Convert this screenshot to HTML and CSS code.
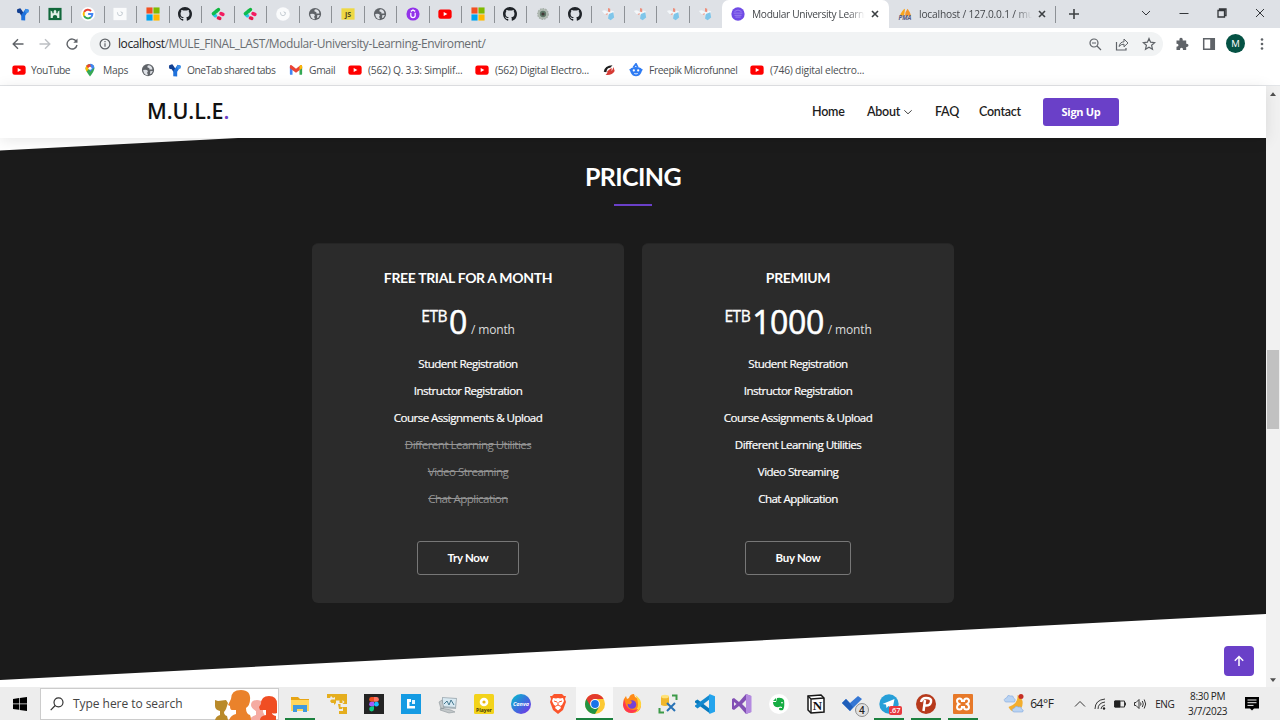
FILE: index.html
```html
<!DOCTYPE html>
<html lang="en">
<head>
<meta charset="utf-8">
<title>Modular University Learning Enviroment</title>
<link rel="stylesheet" href="styles.css">
</head>
<body>
<svg class="defs" aria-hidden="true">
  <symbol id="onetab" viewBox="0 0 16 16"><path d="M1.500 2.500 5 1.500 8.500 6.500 8 12 5.500 9Z" fill="#123f91"/><path d="M14.800 3.500 11 2 6 9v6l4.500.500V10Z" fill="#1f72dc"/><circle cx="3.600" cy="4.500" r="2.600" fill="#123f91"/><circle cx="12.500" cy="4.500" r="2.300" fill="#3c8fe8"/></symbol>
  <symbol id="castle" viewBox="0 0 16 16"><path d="M.5 1h15v14H.5z" fill="#12683b"/><path d="M3 4l2 1.500V7h1.500V4.500L8 3l1.500 1.500V7H11V5.500L13 4v8.500h-2.500V11q0-2-2.500-2t-2.500 2v1.500H3Z" fill="#e3f0e7"/></symbol>
  <symbol id="google" viewBox="0 0 16 16"><circle cx="8" cy="8" r="8" fill="#fff"/><g fill="none" stroke-width="2.200"><path d="M11.500 4.600A5 5 0 0 0 3.600 5.700" stroke="#ea4335"/><path d="M3.600 5.700a5 5 0 0 0 0 4.600" stroke="#fbbc05"/><path d="M3.600 10.300a5 5 0 0 0 7.700 1.500" stroke="#34a853"/><path d="M11.300 11.800A5 5 0 0 0 13 8H8.200" stroke="#4285f4"/></g></symbol>
  <symbol id="sketchsq" viewBox="0 0 16 16"><path d="M.5 1h15v14H.5z" fill="#fafbfc"/><path d="M5 6q0 4 3 4t3-4M9 5l1 2" fill="none" stroke="#c0c8cf"/></symbol>
  <symbol id="sketch" viewBox="0 0 16 16"><circle cx="8" cy="8" r="7.800" fill="#fafbfc"/><path d="M5 6q0 4 3 4t3-4M9 5l1 2" fill="none" stroke="#c0c8cf"/></symbol>
  <symbol id="ms" viewBox="0 0 16 16"><path d="M.5.5h7v7h-7z" fill="#f25022"/><path d="M8.500.5h7v7h-7z" fill="#7fba00"/><path d="M.5 8.500h7v7h-7z" fill="#00a4ef"/><path d="M8.500 8.500h7v7h-7z" fill="#ffb900"/></symbol>
  <symbol id="github" viewBox="0 0 16 16"><path fill="#202429" d="M8 0C3.580 0 0 3.580 0 8c0 3.540 2.290 6.530 5.470 7.590.4.070.55-.17.55-.38 0-.19-.01-.82-.01-1.490-2.010.37-2.530-.49-2.690-.94-.09-.23-.48-.94-.82-1.130-.28-.15-.68-.52-.01-.53.63-.01 1.080.58 1.230.82.72 1.210 1.870.87 2.330.66.070-.52.28-.87.51-1.070-1.780-.2-3.640-.89-3.640-3.950 0-.87.31-1.590.82-2.150-.08-.2-.36-1.020.08-2.120 0 0 .67-.21 2.200.82A7.600 7.600 0 0 1 8 3.860c.68 0 1.360.09 2 .27 1.530-1.040 2.200-.82 2.200-.82.44 1.100.16 1.920.08 2.120.51.56.82 1.270.82 2.150 0 3.070-1.870 3.750-3.650 3.950.29.25.54.73.54 1.480 0 1.070-.01 1.930-.01 2.200 0 .21.15.46.55.38A8 8 0 0 0 16 8c0-4.420-3.580-8-8-8"/></symbol>
  <symbol id="clover" viewBox="0 0 16 16"><g stroke-linecap="round" stroke-width="4"><path d="M6.500 4.500 8.500 3" stroke="#0eb53d"/><path d="M3.500 8.500 5 10" stroke="#28c5e9"/><path d="M11.500 7.500 13.500 8.500" stroke="#f31d61"/><path d="M8.500 12.500 10 13" stroke="#e8194e"/><path d="M2.800 7.500 6 5" stroke="#12bc50"/></g></symbol>
  <symbol id="globe" viewBox="0 0 16 16"><circle cx="8" cy="8" r="7" fill="#5f6368"/><path d="M2.500 8q4-1 5.500 1l-1 2 1 3q-5 0-5.500-6M7.500 3q-1 2 1 2.500t1 2h3.500q0-4-4-5M10.500 9.500q3-1 3 0l-2 3h-1Z" fill="#dee1e6"/></symbol>
  <symbol id="js" viewBox="0 0 16 16"><path d="M.5 1.500h15v13H.5z" fill="#eed843"/><text x="8" y="11" text-anchor="middle" font-size="8" font-weight="700" fill="#4c4722">JS</text></symbol>
  <symbol id="udemy" viewBox="0 0 16 16"><circle cx="8" cy="8" r="7.500" fill="#9333ea"/><path d="M5.500 6.500v3.300q0 2.400 2.500 2.400t2.500-2.400V6.500M5.500 5 8 3.400 10.500 5" fill="none" stroke="#fff" stroke-width="1.400"/></symbol>
  <symbol id="yt" viewBox="0 0 16 16"><rect x=".4" y="2.800" width="15.200" height="10.600" rx="2.600" fill="#f00"/><path d="m6.500 5.800 4.200 2.300-4.200 2.300Z" fill="#fff"/></symbol>
  <symbol id="seal" viewBox="0 0 16 16"><circle cx="8" cy="8" r="6" fill="#b1bbb3" stroke="#a6b0a9" stroke-width="1.500" stroke-dasharray="2 1"/><circle cx="8" cy="8" r="3.600" fill="#5e7868"/><circle cx="8" cy="8" r="1.800" fill="#433936"/></symbol>
  <symbol id="painter" viewBox="0 0 16 16"><path d="M1 4.500q4-2 7 1.500l4-2 3 1-1 2-5 2-5-1Z" fill="#f3f7fa"/><path d="m8 1 2.500 1v4L8 5ZM5 8l3-1-1 2Z" fill="#ec8f7c"/><path d="m9 8 5-2 1 6-4 3-3-2Z" fill="#7fc6ea"/></symbol>
  <symbol id="mule" viewBox="0 0 16 16"><circle cx="8" cy="8" r="7.600" fill="#704be5"/><path d="M3 7h10M4 5q4-3 8 0M4 9.500h8M5 11.500h6" stroke="#9f88f0" fill="none"/></symbol>
  <symbol id="pma" viewBox="0 0 16 16"><path d="M2 10Q5 3 8 2l-1 8Z" fill="#f8a51b"/><path d="M8 10q0-5 3-8 3 4 4 8Z" fill="#f3962c"/><text x="8" y="15" text-anchor="middle" font-size="7" font-style="italic" font-weight="700" fill="#55597e">PMA</text></symbol>
  <symbol id="pin" viewBox="0 0 16 16"><path d="M8 15.500Q3 9 3 6a5 5 0 0 1 10 0q0 3-5 9.500" fill="#35a853"/><path d="M8 1a5 5 0 0 1 5 4L8 10Z" fill="#4285f4"/><path d="M3 7.500V5a5 5 0 0 1 2-3l3 3-4 5Z" fill="#fbbc04"/><path d="M3.800 3.500A5 5 0 0 1 8 1l1 3-3 2Z" fill="#ea4335"/><circle cx="8" cy="6" r="1.800" fill="#fff"/></symbol>
  <symbol id="gmail" viewBox="0 0 16 16"><path d="M1 4h3v9.500H2q-1 0-1-1Z" fill="#4285f4"/><path d="M12 4h3v8.500q0 1-1 1h-2Z" fill="#34a853"/><path d="M1 4q0-2 2-1.500l5 4 5-4q2-.5 2 1.500v2l-7 5-7-5Z" fill="#ea4335"/><path d="M12 3.500 13 2.500q2-.5 2 1.500v2l-3 2Z" fill="#fbbc04"/></symbol>
  <symbol id="swirl" viewBox="0 0 16 16"><path d="M2 10Q3 3 12 2.500L9.500 5.500q-4 0-4.500 5Z" fill="#1d1d1d"/><path d="m13 4.500 1.500 4.500q-3 5.500-10.500 4.500l3-3q4 0 5-3ZM6 9.500l5-4v4l-5 2Z" fill="#d63a33"/></symbol>
  <symbol id="freepik" viewBox="0 0 16 16"><path d="M2 6q6-3 12 0v5q-2 4-6 4t-6-4Z" fill="#2f7cf3"/><path d="m5 5 3-4 2 4M1 7l2 3m12-3-2 3" stroke="#2f7cf3" stroke-width="2" fill="none"/><circle cx="5.500" cy="8.500" r="1.300" fill="#fff"/><circle cx="10.500" cy="8.500" r="1.300" fill="#fff"/><path d="M6 12q2 1 4 0" stroke="#fff" fill="none"/></symbol>
</svg>

<div class="tabstrip">
  <div class="tabs">
    <span class="tab"><svg><use href="#onetab"/></svg></span><span class="tab"><svg><use href="#castle"/></svg></span><span class="tab"><svg><use href="#google"/></svg></span><span class="tab"><svg><use href="#sketchsq"/></svg></span><span class="tab"><svg><use href="#ms"/></svg></span><span class="tab"><svg><use href="#github"/></svg></span><span class="tab"><svg><use href="#clover"/></svg></span><span class="tab"><svg><use href="#clover"/></svg></span><span class="tab"><svg><use href="#sketch"/></svg></span><span class="tab"><svg><use href="#globe"/></svg></span><span class="tab"><svg><use href="#js"/></svg></span><span class="tab"><svg><use href="#globe"/></svg></span><span class="tab"><svg><use href="#udemy"/></svg></span><span class="tab"><svg><use href="#yt"/></svg></span><span class="tab"><svg><use href="#ms"/></svg></span><span class="tab"><svg><use href="#github"/></svg></span><span class="tab"><svg><use href="#seal"/></svg></span><span class="tab"><svg><use href="#github"/></svg></span><span class="tab"><svg><use href="#painter"/></svg></span><span class="tab"><svg><use href="#painter"/></svg></span><span class="tab"><svg><use href="#painter"/></svg></span><span class="tab last"><svg><use href="#painter"/></svg></span>
  </div>
  <div class="tab-active"><svg class="fav"><use href="#mule"/></svg><span class="tab-title">Modular University Learni</span><svg class="x" viewBox="0 0 8 8"><path d="m1 1 6 6m0-6L1 7"/></svg></div>
  <div class="tab-pma"><svg class="fav"><use href="#pma"/></svg><span class="tab-title second">localhost / 127.0.0.1 / mu</span><svg class="x" viewBox="0 0 8 8"><path d="m1 1 6 6m0-6L1 7"/></svg></div>
  <svg class="plus" viewBox="0 0 12 12"><path d="M6 1v10M1 6h10"/></svg>
  <div class="winctl">
    <svg viewBox="0 0 10 10"><path d="m1 3 4 4 4-4"/></svg>
    <svg viewBox="0 0 10 10"><path d="M.5 5.500h9"/></svg>
    <svg viewBox="0 0 10 10"><path d="M1 2.500h6.500V9H1zM2.500 2V1H9v6.500H8" class="bold"/></svg>
    <svg viewBox="0 0 10 10"><path d="m1 1 8 8m0-8L1 9"/></svg>
  </div>
</div>

<div class="toolbar">
  <div class="navbtns">
    <svg viewBox="0 0 12 12"><path d="M11.500 6H1.300M6 1.200 1.200 6 6 10.800"/></svg>
    <svg class="dim" viewBox="0 0 12 12"><path d="M.5 6h10.200M6 1.200 10.800 6 6 10.800"/></svg>
    <svg viewBox="0 0 12 12"><path d="M10.400 3.500A5 5 0 1 0 11 7"/><path d="M11.500.5v4.200H7.300Z" fill="#5f6368" stroke="none"/></svg>
  </div>
  <div class="omnibox">
    <svg class="info" viewBox="0 0 12 12"><circle cx="6" cy="6" r="4.900"/><path d="M6 5.300v3.500M6 3v1.200"/></svg>
    <span class="url"><b>localhost</b>/MULE_FINAL_LAST/Modular-University-Learning-Enviroment/</span>
    <svg class="oi" viewBox="0 0 14 14"><circle cx="6" cy="6" r="4"/><path d="m9 9 4 4M4 6h4"/></svg>
    <svg class="oi" viewBox="0 0 14 14"><path d="M1.500 5v8H11v-2" /><path d="M4 9.500Q5 4.800 9 4.800V2l4 4-4 3.800V7.200Q6 7 4 9.500Z" stroke-width="1"/></svg>
    <svg class="oi" viewBox="0 0 14 14"><path d="m7 1.500 1.600 3.700 4 .4-3 2.700.9 4L7 10.200l-3.500 2.100.9-4-3-2.700 4-.4Z"/></svg>
  </div>
  <div class="exts">
    <svg viewBox="0 0 14 14"><path fill="#5f6368" stroke="none" d="M1.500 3.500h3Q4 .8 6 .8t1.700 2.700h3.500v3.200q2.300-.2 2.300 1.600t-2.300 1.600V13H8q.2-2.200-1.500-2.200T5 13H1.500V9.700q2-.1 2-1.500t-2-1.400Z"/></svg>
    <svg viewBox="0 0 14 14"><path d="M1.700 1.700h10.600v10.600H1.700z" stroke-width="1.500"/><path d="M8.200 1h4.500v12H8.200z" fill="#5f6368" stroke="none"/></svg>
    <span class="avatar">M</span>
    <svg viewBox="0 0 14 14"><g fill="#5f6368" stroke="none"><circle cx="7" cy="2.500" r="1.300"/><circle cx="7" cy="7" r="1.300"/><circle cx="7" cy="11.500" r="1.300"/></g></svg>
  </div>
</div>

<div class="bookmarks">
  <span class="bm bm-youtube"><svg><use href="#yt"/></svg>YouTube</span>
  <span class="bm bm-maps"><svg><use href="#pin"/></svg>Maps</span>
  <span class="bm bm-globe"><svg><use href="#globe"/></svg></span>
  <span class="bm bm-onetab"><svg><use href="#onetab"/></svg>OneTab shared tabs</span>
  <span class="bm bm-gmail"><svg><use href="#gmail"/></svg>Gmail</span>
  <span class="bm bm-q"><svg><use href="#yt"/></svg>(562) Q. 3.3: Simplif...</span>
  <span class="bm bm-digital"><svg><use href="#yt"/></svg>(562) Digital Electro...</span>
  <span class="bm bm-swirl"><svg><use href="#swirl"/></svg></span>
  <span class="bm bm-freepik"><svg><use href="#freepik"/></svg>Freepik Microfunnel</span>
  <span class="bm bm-last"><svg><use href="#yt"/></svg>(746) digital electro...</span>
</div>

<div class="viewport">
  <div class="page">
    <header class="header">
      <div class="logo">M.U.L.E<i>.</i></div>
      <nav class="nav">
        <a class="n-home">Home</a>
        <a class="n-about">About<svg viewBox="0 0 8 8"><path d="m.3 2.300 3.700 3.500 3.700-3.500"/></svg></a>
        <a class="n-faq">FAQ</a>
        <a class="n-contact">Contact</a>
        <a class="signup">Sign Up</a>
      </nav>
    </header>
    <main class="main">
      <section class="pricing">
        <h2>PRICING</h2>
        <div class="rule"></div>
        <div class="cards">
          <article class="card">
            <h3>FREE TRIAL FOR A MONTH</h3>
            <div class="price"><sup>ETB</sup><strong>0</strong><small>/ month</small></div>
            <ul>
              <li>Student Registration</li><li>Instructor Registration</li><li>Course Assignments &amp; Upload</li>
              <li class="na">Different Learning Utilities</li><li class="na">Video Streaming</li><li class="na">Chat Application</li>
            </ul>
            <a class="buy try">Try Now</a>
          </article>
          <article class="card premium">
            <h3>PREMIUM</h3>
            <div class="price"><sup>ETB</sup><strong>1000</strong><small>/ month</small></div>
            <ul>
              <li>Student Registration</li><li>Instructor Registration</li><li>Course Assignments &amp; Upload</li>
              <li>Different Learning Utilities</li><li>Video Streaming</li><li>Chat Application</li>
            </ul>
            <a class="buy">Buy Now</a>
          </article>
        </div>
      </section>
      <a class="totop"><svg viewBox="0 0 12 12"><path d="M6 11V1.500M1.800 5.700 6 1.500l4.200 4.200"/></svg></a>
    </main>
  </div>
  <div class="scrollbar">
    <svg viewBox="0 0 8 5"><path d="M4 0l4 5H0z"/></svg>
    <div class="thumb"></div>
    <svg viewBox="0 0 8 5"><path d="M0 0h8L4 5z"/></svg>
  </div>
</div>

<div class="taskbar">
  <div class="start"><svg viewBox="0 0 14 14"><path d="M0 2l6-.9v5.500H0zM6.700 1 14 0v6.600H6.700zM0 7.300h6v5.500L0 12zM6.700 7.300H14V14l-7.300-1z"/></svg></div>
  <div class="search">
    <svg class="lens" viewBox="0 0 14 14"><circle cx="8.500" cy="5.300" r="4.500"/><path d="M5.200 8.500.7 13.200"/></svg>
    <span>Type here to search</span>
    <svg class="people" viewBox="0 0 64 32"><path d="M36 32q0-3 6-5v-4q-5-3-5-6 0-5 6-5 4 0 6 3v9l4 8Z" fill="#f5aba2"/><path d="M46 32q0-4 6-5v-5h-6l-1-3 2-3q0-8 8-8 8 0 8 8v9q-3 1-5 0 0 2 4 3v4Z" fill="#f04e23"/><path d="M1 32q1-4 5-5v-4q-5-1-5-5V12l3 1 8-1 2 3-2 6q-1 2-2 3 0 3 3 4l1 4Z" fill="#b98a2a"/><path d="M15 32q2-5 7-6v-4h-4q-2 0-2-4l-2-1 3-6q0-9 10-9t9 10q0 5-4 8 0 6 4 7 1 2 1 5Z" fill="#ea822b"/></svg>
  </div>
  <div class="apps">
    <span class="app run"><svg viewBox="0 0 20 20"><path d="M1 3h7l2 2h9v12H1z" fill="#e7a514"/><path d="M1 6h18v11H1z" fill="#ffd75e"/><path d="M3 18v-7h14v7h-4v-3H7v3Z" fill="#409ade"/></svg></span>
    <span class="app"><svg viewBox="0 0 20 20"><path d="M0 0h20v10h-4.500l2-2-2-2v3h-3V6.500H9V9l-2 2V9H4.500L3 7l1.500-1.500H8V3L6 4 4 2 3 4H0ZM11 10h2.500v3H16l-1 2h-3Zm5 3h4v7h-8v-3h4Z" fill="#e5ae1e"/></svg></span>
    <span class="app"><svg viewBox="0 0 20 20"><path d="M0 0h20v20H0z" fill="#242424"/><path d="M10 3H7.500a2.400 2.400 0 0 0 0 4.800H10Z" fill="#f24e1e"/><path d="M10 3h2.500a2.400 2.400 0 0 1 0 4.800H10Z" fill="#ff7262"/><path d="M10 7.800H7.500a2.400 2.400 0 0 0 0 4.800H10Z" fill="#a259ff"/><circle cx="12.400" cy="10.200" r="2.400" fill="#1abcfe"/><path d="M10 12.600H7.500A2.400 2.400 0 1 0 10 15Z" fill="#0acf83"/></svg></span>
    <span class="app"><svg viewBox="0 0 20 20"><path d="M0 0h20v20H0z" fill="#159be3"/><path d="M6 5h4v3H8.500v4H14v2.500H6Z" fill="#fff"/><path d="M11 6h3v4h-3z" fill="#e5f6ff"/></svg></span>
    <span class="app"><svg viewBox="0 0 20 20"><path d="m4 3 15 1-1 11-14-1Z" fill="#a7b3ba"/><path d="m5 4 13 1-1 8-12-1Z" fill="#d8e9f2"/><path d="m6 10 3-3 2 4 2-5 3 5" fill="none" stroke="#477990"/><path d="m1 8 3-2 2 8-3 1ZM3 14l10 2 4 2-6 1-9-3Z" fill="#c2c7c9" stroke="#7f898e" stroke-width=".5"/></svg></span>
    <span class="app"><svg viewBox="0 0 20 20"><rect width="20" height="20" rx="1.500" fill="#f3d31b"/><circle cx="10" cy="8" r="4.300" fill="#fff"/><circle cx="10" cy="8" r="1.600" fill="#e8b517"/><text x="10" y="18" text-anchor="middle" font-size="5" font-weight="700" fill="#453c09">Player</text></svg></span>
    <span class="app"><svg viewBox="0 0 20 20"><defs><linearGradient id="cv" x2="1" y2="1"><stop stop-color="#00c4cc"/><stop offset=".5" stop-color="#3972dc"/><stop offset="1" stop-color="#7d2ae8"/></linearGradient></defs><circle cx="10" cy="10" r="10" fill="url(#cv)"/><text x="10" y="12" text-anchor="middle" font-size="5.500" font-style="italic" font-weight="700" fill="#fff">Canva</text></svg></span>
    <span class="app"><svg viewBox="0 0 20 20"><path d="m6 0h8l2 2 2 0-1 3 1 3-3 8-5 4-5-4-3-8 1-3-1-3 2 0Z" fill="#fb542b"/><path d="m5 4 3 .5 2-.5 2 .5 3-.5 1 3-2 4-2 1 1 2-3 2.500L7 14l1-2-2-1-2-4Z" fill="#fff"/><path d="m6 7 3 1m5-1-3 1m-1 0v3l-2 1m2-1 2 1" stroke="#fb542b" fill="none"/></svg></span>
    <span class="app current"><svg viewBox="0 0 20 20"><circle cx="10" cy="10" r="10" fill="#fcc934"/><path d="M10 10 1.340 5A10 10 0 0 0 10 20L14.300 12.500Z" fill="#229342"/><path d="M5.300 11.800 1.340 5A10 10 0 0 1 18.660 5H10Z" fill="#e33b2e"/><circle cx="10" cy="10" r="4.900" fill="#fff"/><circle cx="10" cy="10" r="3.900" fill="#1a73e8"/></svg></span>
    <span class="app"><svg viewBox="0 0 20 20"><path d="M2 5l2-3 1 3 2-1q1-4 5-4l1 3q6 2 6 9-1 7-9 7T1 11Z" fill="#ff8a16"/><path d="M13 1q7 4 6 11-2 7-9 7 6-3 6-8 0-6-3-10" fill="#ffd43b"/><path d="M2 5 1 11q1 7 8 8 5 0 7-4-9 3-12-4Z" fill="#ff3750"/><circle cx="10" cy="10.500" r="4.300" fill="#7542d5"/><path d="m5 7 4-.500 1 2-2 2-3-1Z" fill="#ff8a16"/></svg></span>
    <span class="app"><svg viewBox="0 0 20 20"><path d="M3 2v9q4 2 8 0V2Z" fill="#f1b72c"/><ellipse cx="7" cy="2.500" rx="4" ry="1.800" fill="#ffe278"/><path d="M14 1.500h4.500V6M1.500 14v4.500H6" fill="none" stroke="#3c9a48" stroke-width="2"/><path d="m9 9 8 8m0-8-8 8" stroke="#2872b5" stroke-width="2"/></svg></span>
    <span class="app"><svg viewBox="0 0 20 20"><path d="m0 7 2.500-1.500L15 15v4.500L0 8.500Z" fill="#0879bd"/><path d="m0 12.500 2.500 2L15 5V.5L0 11.500Z" fill="#1389cf"/><path d="m14.500 0 5.500 2.300v15.400L14.500 20l-.5-4V4Z" fill="#24a4ed"/></svg></span>
    <span class="app"><svg viewBox="0 0 20 20"><path d="m0 5 2-1 5 4 7-8 5 2v16l-5 2-7-8-5 4-2-1Zm2 3v4l2.500-2ZM14 6l-4 4 4 4Z" fill="#8250b4" fill-rule="evenodd"/><path d="m14 0 5.500 2v16L14 20Z" fill="#b48ae0"/></svg></span>
    <span class="app"><svg viewBox="0 0 20 20"><circle cx="10" cy="10" r="10" fill="#fff"/><path d="M4 8h3l1-4q5-1 7 2 1 7-1 10-4 1-4-1 0-2 3-1v-1q-2-1-3 0-6 1-6-5Zm0-1 3-3v3Z" fill="#16ad43"/><path d="M12 9q1-1 2 0" stroke="#fff" fill="none"/></svg></span>
    <span class="app"><svg viewBox="0 0 20 20"><path d="m2 2 13-1 3 3v14L5 19l-3-3Z" fill="#fff" stroke="#161616" stroke-width="1.500"/><path d="m2 2 3 3 13-1M5 5v14" fill="none" stroke="#161616" stroke-width="1.300"/><text x="11.500" y="16" text-anchor="middle" font-family="Liberation Serif" font-size="13" font-weight="700" fill="#111">N</text></svg></span>
    <span class="app"><svg viewBox="0 0 20 20"><path d="m0 9 4-4 4 4 8-7 4 3L8 17Z" fill="#3577d4"/><path d="m0 9 4-4 7 8-3 4Z" fill="#1f5eb9"/></svg><em class="count">4</em></span>
    <span class="app run"><svg viewBox="0 0 20 20"><circle cx="10" cy="10" r="9.700" fill="#279fd8"/><path d="m3.500 10 12-5-2 10-4-3-2 2-.5-3.500Z" fill="#fff"/></svg><em class="red">.67</em></span>
    <span class="app run"><svg viewBox="0 0 20 20"><circle cx="10" cy="10" r="10" fill="#b73a1c"/><path d="M7.500 17 9 6M5 8q1-4 5-4 6 0 5 4-1 4-6 3.500" fill="none" stroke="#fff" stroke-width="2.500"/></svg></span>
    <span class="app run"><svg viewBox="0 0 20 20"><rect width="20" height="20" rx="1" fill="#e77929"/><path d="M6.500 4.500q-2.500 0-2.500 2.500 0 2 2 3-2 1-2 3 0 2.500 2.500 2.500t2.500-2.500h2q0 2.500 2.500 2.500T16 13q0-2-2-3 2-1 2-3 0-2.500-2.500-2.500T11 7H9q0-2.500-2.500-2.500Z" fill="none" stroke="#fff" stroke-width="2"/></svg></span>
  </div>
  <div class="weather"><svg viewBox="0 0 20 20"><path d="M14 1q1 9-9 12 3 6 9 4 6-3 5-10-2-5-5-6" fill="#f3ae2e"/><path d="M2 8q-3-3 1-4 1-4 4-2 3-1 3 2 3 1 1 4Z" fill="#b9d3f2" stroke="#81a8df" stroke-width=".6"/><path d="M10 18q-3-3 1-4 1-3 4-1 3-1 3 2 3 1 1 3Z" fill="#b9d3f2" stroke="#81a8df" stroke-width=".6"/><circle cx="17.500" cy="2.500" r="2.500" fill="#c52e25"/></svg><span>64°F</span></div>
  <div class="tray">
    <svg viewBox="0 0 12 12"><path d="m1 8.500 5-5 5 5"/></svg>
    <svg viewBox="0 0 12 12"><path d="M1 11Q1 2 11 1M4 11q0-6 7-7M7 11q0-3 4-4" /><circle cx="10" cy="10.500" r="1.200" fill="#222" stroke="none"/></svg>
    <svg viewBox="0 0 12 12"><path d="M.5 3h10v6H.5zM11.500 4.500v3"/><path d="M1 3h5v6H1z" fill="#222"/></svg>
    <svg class="vol" viewBox="0 0 13 12"><path d="M.5 4.500H2l3-3v9l-3-3H.5zM6.500 4.500q1 1.500 0 3M8.300 3q2 3 0 6M10.200 1.500q3 4.500 0 9"/></svg>
  </div>
  <span class="lang">ENG</span>
  <div class="clock"><span>8:30 PM</span><span>3/7/2023</span></div>
  <svg class="note" viewBox="0 0 14 14"><path d="M0 0h14v11.500H9L7 13.500 5 11.500H0z"/><path d="M2.500 3h9M2.500 5.700h9M2.500 8.400h6" stroke="#eee" stroke-width="1"/></svg>
</div>
</body>
</html>
```
FILE: styles.css
```css
* { box-sizing: border-box; }
body { margin: 0; width: 1280px; height: 720px; overflow: hidden; display: flex; flex-direction: column; background: #fff; font-family: "Open Sans", "Noto Sans", sans-serif; color: #5f6368; }
svg { display: block; flex: none; fill: none; stroke-linecap: butt; }
.defs { display: none; }
.tabstrip { height: 28px; flex: none; background: #dee1e6; display: flex; align-items: center; }
.tabs { display: flex; padding-left: 7px; width: 722px; }
.tab { width: 32.500px; flex: none; height: 17px; display: flex; align-items: center; justify-content: center; border-right: 1px solid #8d9196; }
.tab.last { border-color: transparent; }
.tab svg { width: 14px; height: 14px; }
.tab-active { width: 167px; height: 28px; background: #fff; border-radius: 7px 7px 0 0; display: flex; align-items: center; padding-left: 9px; }
.fav { width: 14px; height: 14px; }
.tab-title { width: 113px; margin-left: 7px; white-space: nowrap; font-size: 10.200px; line-height: 16px; letter-spacing: -.33px; color: #45484c; -webkit-mask-image: linear-gradient(90deg, #000 85%, transparent); mask-image: linear-gradient(90deg, #000 85%, transparent); }
.tab-title.second { letter-spacing: -.18px; }
.x { width: 8px; height: 8px; margin-left: 6px; stroke: #3c4043; stroke-width: 1.600; }
.tab-pma { width: 167px; height: 17px; border-right: 1px solid #8d9196; display: flex; align-items: center; padding-left: 9px; }
.plus { width: 12px; height: 12px; margin-left: 12px; stroke: #3c4043; stroke-width: 1.600; }
.winctl { margin-left: 61px; display: flex; gap: 28px; padding-bottom: 3px; }
.winctl svg { width: 10px; height: 10px; stroke: #33363a; stroke-width: 1; }
.winctl .bold { stroke-width: 1.300; }
.toolbar { height: 31px; flex: none; display: flex; align-items: center; }
.navbtns { display: flex; gap: 15px; padding-left: 12px; width: 90px; }
.navbtns svg { width: 12px; height: 12px; stroke: #5f6368; stroke-width: 1.400; }
.navbtns .dim { stroke: #bdc0c4; }
.omnibox { width: 1073px; height: 24px; border-radius: 12px; background: #f1f3f4; display: flex; align-items: center; padding-left: 9px; }
.info { width: 12px; height: 12px; stroke: #5f6368; stroke-width: 1.200; }
.url { margin-left: 7px; width: 970px; flex: none; font-size: 12px; line-height: 20px; letter-spacing: -.41px; color: #696d71; white-space: nowrap; }
.url b { font-weight: 400; color: #202124; }
.oi { width: 14px; height: 14px; margin-right: 13px; stroke: #5f6368; stroke-width: 1.200; }
.oi:last-child { margin-right: 0; }
.exts { display: flex; align-items: center; padding-left: 11px; }
.exts svg { width: 14px; height: 14px; margin-left: 1px; margin-right: 12px; stroke: #5f6368; }
.exts svg:last-child { margin: 0 0 0 10px; }
.avatar { width: 19px; height: 19px; margin-left: -2px; border-radius: 50%; background: #055244; color: #fff; font-size: 9.500px; line-height: 19px; text-align: center; }
.bookmarks { height: 27px; flex: none; display: flex; align-items: center; padding: 0 0 4px 12px; border-bottom: 1px solid #e3e5e8; font-size: 10.300px; line-height: 16px; letter-spacing: -.2px; color: #4c4f53; white-space: nowrap; }
.bm { display: flex; align-items: center; gap: 6px; }
.bm svg { width: 14px; height: 14px; }
.bm-youtube { width: 71px; gap: 5px; letter-spacing: -.45px; }
.bm-maps { width: 58px; letter-spacing: -.3px; }
.bm-globe { width: 27px; }
.bm-onetab { width: 121px; gap: 5px; letter-spacing: -.48px; }
.bm-gmail { width: 59px; letter-spacing: -.35px; }
.bm-q { width: 127px; letter-spacing: -.25px; }
.bm-digital { width: 127px; letter-spacing: -.28px; }
.bm-swirl { width: 27px; }
.bm-freepik { width: 121px; letter-spacing: -.4px; }
.bm-last { letter-spacing: -.22px; }

.viewport { height: 601px; flex: none; display: flex; }
.page { width: 1266px; display: flex; flex-direction: column; background: #fff; }
.header { position: relative; z-index: 1; height: 52px; flex: none; background: #fff; display: flex; align-items: center; justify-content: space-between; padding: 0 147px 0 147px; box-shadow: 0 2px 14px rgba(0,0,0,.1); }
.logo { font-size: 21.500px; line-height: 30px; font-weight: 600; color: #111; letter-spacing: -.1px; padding-bottom: 3px; }
.logo i { font-style: normal; color: #6a40c8; }
.nav { display: flex; align-items: center; font-family: Lato, sans-serif; font-size: 12.500px; font-weight: 600; letter-spacing: -.25px; color: #1d1d1d; }
.nav a { display: flex; align-items: center; white-space: nowrap; padding-bottom: 1px; }
.nav svg { width: 8px; height: 8px; margin-left: 4px; stroke: #444; }
.n-home { width: 55px; }
.n-about { width: 68px; }
.n-faq { width: 44px; }
.n-contact { width: 64px; }
.nav .signup { width: 76px; height: 28px; border-radius: 3px; background: #6a40c8; color: #fff; justify-content: center; font-size: 11px; font-family: "Open Sans", sans-serif; font-weight: 700; letter-spacing: -.32px; }
.main { position: relative; height: 549px; background: #fff; }
.pricing { height: 543px; background: #1b1b1b; clip-path: polygon(0 12.500px, 238px 0, 100% 0, 100% 476px, 0 542px); padding-top: 20px; display: flex; flex-direction: column; align-items: center; }
.pricing h2 { margin: 0; font: 700 25px/36px Lato, sans-serif; letter-spacing: -.6px; color: #fff; }
.rule { width: 38px; height: 2px; margin-top: 10px; background: #6a40c8; }
.cards { display: flex; gap: 18px; margin-top: 37px; }
.card { width: 312px; height: 360px; border-radius: 6px; border-top: 1px solid #252525; background: #2b2b2b; display: flex; flex-direction: column; align-items: center; padding-top: 22px; color: #fff; }
.card h3 { margin: 0; font: 700 14px/24px Lato, sans-serif; letter-spacing: -.34px; }
.price { display: flex; height: 48px; margin-top: 8px; white-space: nowrap; }
.price sup { font-size: 15.500px; line-height: 24px; margin-top: 6px; -webkit-text-stroke: .35px #fff; letter-spacing: -.45px; }
.price strong { font-size: 32px; line-height: 48px; font-weight: 400; margin: 0 4px 0 2px; letter-spacing: -.4px; -webkit-text-stroke: .6px #fff; }
.price small { font-size: 12px; line-height: 20px; margin-top: 22px; letter-spacing: -.15px; color: #ddd; }
.card ul { list-style: none; margin: 4px 0 0; padding: 0; text-align: center; font-size: 11.600px; letter-spacing: -.55px; -webkit-text-stroke: .2px; }
.card li { height: 27px; line-height: 27px; }
.card .na { color: #949494; text-decoration: line-through; -webkit-text-stroke: 0; }
.buy { width: 106px; height: 34px; margin-top: 29px; border: 1px solid #777; border-radius: 3px; font: 700 11.500px/31px Lato, sans-serif; letter-spacing: -.3px; text-align: center; }
.buy.try { width: 102px; }
.totop { position: absolute; right: 12px; top: 508px; width: 30px; height: 30px; border-radius: 4px; background: #6a40c8; display: flex; align-items: center; justify-content: center; }
.totop svg { width: 12px; height: 12px; stroke: #fff; stroke-width: 1.500; }
.scrollbar { width: 14px; background: #f1f1f1; display: flex; flex-direction: column; align-items: center; justify-content: space-between; padding: 6px 0 5px; }
.scrollbar svg { width: 6px; height: 4px; fill: #505050; }
.thumb { width: 12px; height: 79px; margin-bottom: -4px; background: #c1c1c1; }

.taskbar { height: 33px; flex: none; display: flex; align-items: center; background: #ededed; color: #222; }
.start { width: 40px; display: flex; justify-content: center; }
.start svg { width: 14px; height: 14px; fill: #000; }
.search { width: 239px; height: 32px; background: #fff; border: 1px solid #ccc; display: flex; align-items: center; padding-left: 9px; font-size: 12px; letter-spacing: -.05px; color: #444; white-space: nowrap; }
.search span { width: 141px; margin-left: 9px; }
.lens { width: 14px; height: 14px; stroke: #333; stroke-width: 1.200; }
.people { width: 64px; height: 32px; }
.apps { display: flex; margin-left: 3px; }
.app { position: relative; width: 36.800px; height: 33px; display: flex; align-items: center; justify-content: center; }
.app svg { width: 20px; height: 20px; }
.run { background: linear-gradient(#1b813e, #1b813e) center bottom / 30px 2px no-repeat; }
.current { background: #fafafa; border-bottom: 2px solid #1b813e; padding-top: 2px; }
.count { position: absolute; left: 21px; top: 16px; width: 14px; height: 14px; border: 1px solid #8d8d8d; border-radius: 50%; background: #e1e1e1; font: 600 10px/12px "Open Sans", sans-serif; text-align: center; color: #222; }
.red { position: absolute; left: 18px; top: 19px; width: 13px; height: 9px; border-radius: 2px; background: #e8393f; font: 600 7.500px/9px "Open Sans", sans-serif; text-align: center; color: #fff; }
.weather { display: flex; align-items: center; margin-left: 22px; width: 71px; gap: 6px; font-size: 12px; letter-spacing: -.4px; white-space: nowrap; }
.weather svg { width: 21px; height: 20px; }
.tray { display: flex; gap: 8px; width: 80px; align-items: center; }
.tray svg { width: 12px; height: 12px; stroke: #222; stroke-width: .9; }
.tray .vol { width: 13px; }
.lang { width: 30px; font-size: 10px; letter-spacing: -.4px; margin-left: 1px; }
.clock { width: 45px; display: flex; flex-direction: column; align-items: center; font-size: 10px; line-height: 15px; letter-spacing: -.3px; white-space: nowrap; }
.note { width: 14px; height: 14px; margin-left: 15px; fill: #000; }
```
